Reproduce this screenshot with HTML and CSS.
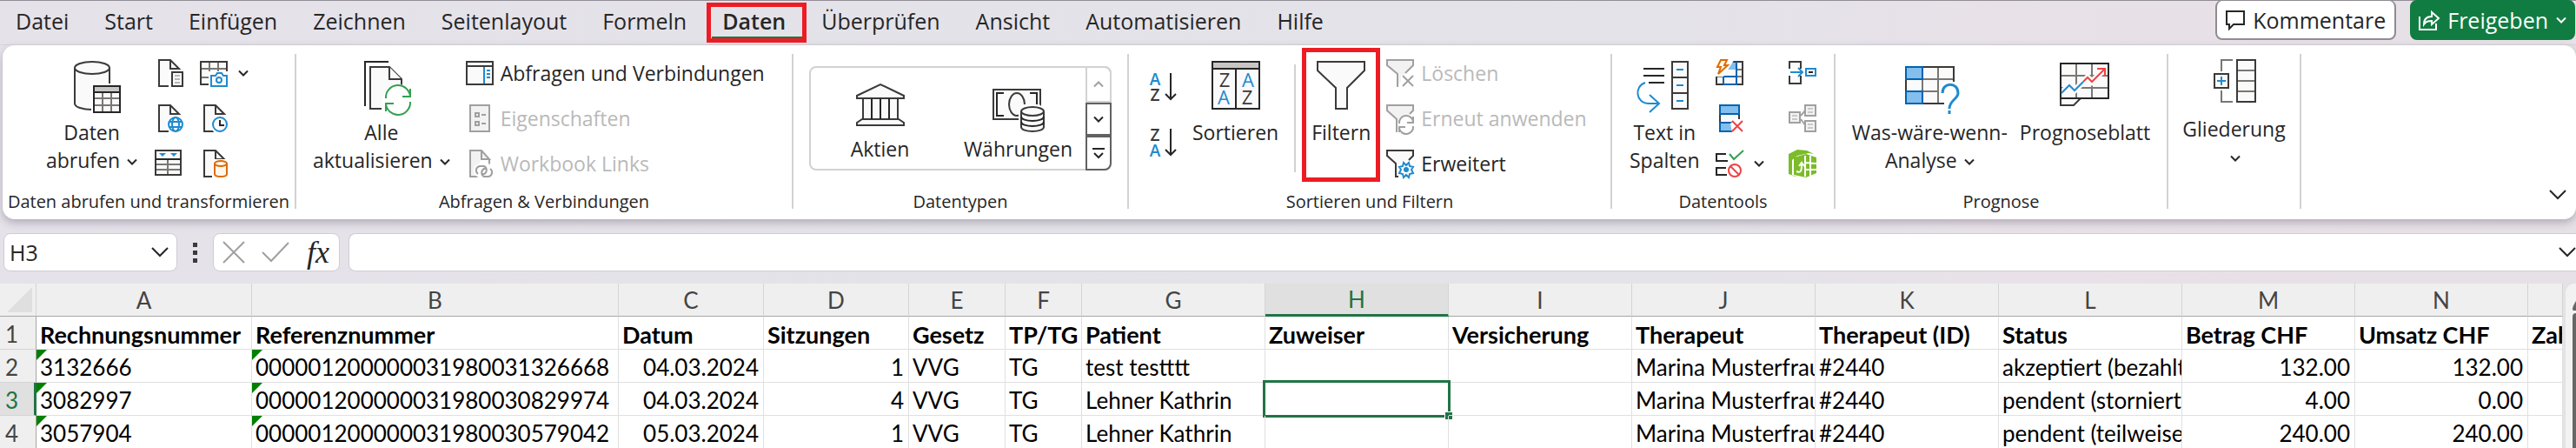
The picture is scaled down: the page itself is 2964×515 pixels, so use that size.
FILE: index.html
```html
<!DOCTYPE html>
<html lang="de">
<head>
  <meta charset="UTF-8">
  <meta name="viewport" content="width=device-width, initial-scale=1.0">
  <title>Excel - Daten</title>
  <link rel="stylesheet" href="styles.css">
</head>
<body>
  <svg class="defs" aria-hidden="true">
    <symbol id="caret" viewBox="0 0 12 8"><path class="line" d="M1 1.5l5 5 5-5"/></symbol>
    <symbol id="chevron" viewBox="0 0 20 12"><path class="line" d="M1 1l9 9 9-9"/></symbol>
    <symbol id="page" viewBox="0 0 32 32"><path class="ink" d="M16 31H5V1h13l10 10H18V1" /></symbol>
  </svg>

  <header class="menubar">
    <nav class="tabs">
      <button class="tab">Datei</button>
      <button class="tab">Start</button>
      <button class="tab">Einfügen</button>
      <button class="tab">Zeichnen</button>
      <button class="tab">Seitenlayout</button>
      <button class="tab">Formeln</button>
      <button class="tab active">Daten</button>
      <button class="tab">Überprüfen</button>
      <button class="tab">Ansicht</button>
      <button class="tab">Automatisieren</button>
      <button class="tab">Hilfe</button>
    </nav>
    <div class="actions">
      <button class="action">
        <svg width="22" height="24"><path class="line" d="M1 2h20v15H9l-5 5v-5H1z"/></svg>
        Kommentare
      </button>
      <button class="action share">
        <svg width="24" height="24"><path class="line" d="M1 8v15h19v-7M6 17c0-6 3-9 9-9V3l8 7-8 7v-4c-4 0-7 1-9 4z"/></svg>
        Freigeben
        <svg class="caret" width="12" height="8"><use href="#caret"/></svg>
      </button>
    </div>
  </header>

  <section class="ribbon">
    <div class="group get-data">
      <div class="group-body">
        <button class="big">
          <svg width="64" height="64">
            <path class="ink" d="M12 10v41c0 4 9 7 20 7s20-3 20-7V10"/>
            <ellipse class="ink" cx="32" cy="10" rx="20" ry="7"/>
            <path class="halo" d="M31 28h34v36H31z"/>
            <path class="ink" d="M34 31h30v30H34z"/>
            <path fill="#c8c6c4" d="M35 32h28v5H35z"/>
            <path class="grey" d="M44 38v22M54 38v22M35 45h28M35 53h28"/>
            <path class="line" d="M34 38h30M34 31h30v30H34z"/>
          </svg>
          <span>Daten</span>
          <span>abrufen <svg class="caret" width="12" height="8"><use href="#caret"/></svg></span>
        </button>
        <div class="icons">
          <button class="small" aria-label="Aus Text/CSV">
            <svg width="32" height="32">
              <use href="#page"/>
              <path class="halo" d="M16 13h16v19H16z"/>
              <path class="ink" d="M20 15h12v16H20z"/>
              <path class="grey thin" d="M23 19h6M23 23h6M23 27h6"/>
            </svg>
          </button>
          <button class="small" aria-label="Aus Bild">
            <svg width="32" height="32">
              <path class="ink" d="M1 3h30v26H1z"/>
              <path class="grey" d="M2 11h28M2 21h28M11 4v24M21 4v24"/>
              <path class="halo" d="M10 14h23v18H10z"/>
              <path class="blue paper" d="M13 19h5l2-3h5l2 3h4v12H13z"/>
              <circle class="blue" cx="22" cy="24" r="3"/>
            </svg>
            <svg class="caret" width="12" height="8"><use href="#caret"/></svg>
          </button>
          <button class="small" aria-label="Aus dem Web">
            <svg width="32" height="32">
              <use href="#page"/>
              <circle class="halo" cx="24" cy="23" r="11"/>
              <circle class="blue paper" cx="24" cy="23" r="8"/>
              <path class="blue" d="M16 20h16M16 26h16"/>
              <ellipse class="blue" cx="24" cy="23" rx="4" ry="8"/>
            </svg>
          </button>
          <button class="small" aria-label="Zuletzt verwendete Quellen">
            <svg width="32" height="32">
              <use href="#page"/>
              <circle class="halo" cx="23" cy="23" r="11"/>
              <circle class="blue paper" cx="23" cy="23" r="8"/>
              <path class="line" d="M23 18v6h5"/>
            </svg>
          </button>
          <button class="small" aria-label="Aus Tabelle/Bereich">
            <svg width="32" height="32">
              <path class="ink" d="M1 1h29v28H1z"/>
              <path class="grey" d="M2 17h27M2 23h27M15 12v16"/>
              <path class="line" d="M1 11h29"/>
              <path fill="#1e8bd0" d="M5 4h8L9 8zM18 4h8l-4 4z"/>
            </svg>
          </button>
          <button class="small" aria-label="Vorhandene Verbindungen">
            <svg width="32" height="32">
              <use href="#page"/>
              <path class="halo" d="M14 11h18v21H14z"/>
              <path class="orange" d="M17 16v12c0 2 3 3 7 3s7-1 7-3V16"/>
              <ellipse class="orange" cx="24" cy="16" rx="7" ry="3"/>
            </svg>
          </button>
        </div>
      </div>
      <div class="group-label">Daten abrufen und transformieren</div>
    </div>

    <div class="group queries">
      <div class="group-body">
        <button class="big">
          <svg width="64" height="64">
            <path class="line" d="M40 3H13v51"/>
            <path class="ink" d="M32 57H19V9h22l14 14v16"/>
            <path class="ink" d="M41 9v14h14"/>
            <circle class="halo" cx="51" cy="47" r="18"/>
            <path class="green" d="M37 45a14 14 0 0 1 28-2M65 49a14 14 0 0 1-28 2M65 34v9h-9M37 60v-9h9"/>
          </svg>
          <span>Alle</span>
          <span>aktualisieren <svg class="caret" width="12" height="8"><use href="#caret"/></svg></span>
        </button>
        <div class="list">
          <button class="small">
            <svg width="32" height="32">
              <path class="ink" d="M1 3h30v26H1zM1 8h30"/>
              <path class="blue" d="M21 9v19M24 13h4M24 17h4M24 21h4"/>
            </svg>
            Abfragen und Verbindungen
          </button>
          <button class="small" disabled>
            <svg width="32" height="32">
              <path class="ink" d="M5 1h22v30H5z"/>
              <path class="line" d="M11 10h4v4h-4zM11 20h4v4h-4zM18 12h5M18 22h5"/>
            </svg>
            Eigenschaften
          </button>
          <button class="small" disabled>
            <svg width="32" height="32">
              <path class="ink" d="M14 31H5V1h13l9 10H18V1M27 11v6"/>
              <rect class="halo" x="9" y="16" width="23" height="16" rx="8"/>
              <path class="line" d="M14 28a5 5 0 0 1 2-9h5a5 5 0 0 1 0 9h-3M28 22a5 5 0 0 1-2 9h-5a5 5 0 0 1 0-9h2"/>
            </svg>
            Workbook Links
          </button>
        </div>
      </div>
      <div class="group-label">Abfragen &amp; Verbindungen</div>
    </div>

    <div class="group datatypes">
      <div class="group-body">
        <div class="gallery">
          <button class="type">
            <svg width="60" height="60">
              <path class="ink" d="M3 17v-3L30 1l27 13v3zM3 48v-3l6-4h42l6 4v3zM10 17h40v24H10z"/>
              <path class="line" d="M20 17v24M30 17v24M40 17v24"/>
            </svg>
            Aktien
          </button>
          <button class="type">
            <svg width="60" height="60">
              <path class="ink" d="M1 7h54v34H1z"/>
              <path class="line" d="M13 11H5v26h8M43 11h8v26"/>
              <ellipse class="ink" cx="28" cy="24" rx="9" ry="13"/>
              <path class="halo" d="M30 30l6-6h18l6 6v26H30z"/>
              <path class="ink" d="M33 32v18c0 3 6 5 13 5s13-2 13-5V32"/>
              <ellipse class="ink" cx="46" cy="32" rx="13" ry="5"/>
              <path class="line" d="M33 38c0 3 6 5 13 5s13-2 13-5M33 44c0 3 6 5 13 5s13-2 13-5"/>
            </svg>
            Währungen
          </button>
          <div class="scroller">
            <button disabled aria-label="Nach oben"><svg width="12" height="8"><path class="line" d="M1 6.5l5-5 5 5"/></svg></button>
            <button aria-label="Nach unten"><svg class="caret" width="12" height="8"><use href="#caret"/></svg></button>
            <button aria-label="Mehr"><svg width="14" height="14"><path class="line" d="M0 2h14M2 7l5 5 5-5"/></svg></button>
          </div>
        </div>
      </div>
      <div class="group-label">Datentypen</div>
    </div>

    <div class="group sort">
      <div class="group-body">
        <div class="sorters">
          <button class="small" aria-label="Von A bis Z sortieren">
            <svg width="32" height="32">
              <text class="letter blue-text" x="7" y="14">A</text>
              <text class="letter" x="7" y="32">Z</text>
              <path class="line" d="M25 0v30M19 24l6 6 6-6"/>
            </svg>
          </button>
          <button class="small" aria-label="Von Z bis A sortieren">
            <svg width="32" height="32">
              <text class="letter" x="7" y="14">Z</text>
              <text class="letter blue-text" x="7" y="32">A</text>
              <path class="line" d="M25 0v30M19 24l6 6 6-6"/>
            </svg>
          </button>
        </div>
        <button class="big">
          <svg width="64" height="64">
            <path class="ink" d="M5 3h54v54H5z"/>
            <path fill="#c8c6c4" d="M6 4h52v6H6z"/>
            <path class="line" d="M5 11h54M32 11v46M5 3h54v54H5z"/>
            <text class="letter light" x="19" y="32">Z</text>
            <text class="letter light blue-text" x="46" y="32">A</text>
            <text class="letter light blue-text" x="18" y="52">A</text>
            <text class="letter light" x="45" y="52">Z</text>
          </svg>
          <span>Sortieren</span>
        </button>
        <div class="divider"></div>
        <button class="big marked">
          <svg width="64" height="64"><path class="ink" d="M5 3h54v10L39 33v24H26V33L5 13z"/></svg>
          <span>Filtern</span>
        </button>
        <div class="list">
          <button class="small" disabled>
            <svg width="32" height="32">
              <path class="ink" d="M13 32V17L1 7V1h30v6l-9 9"/>
              <path class="halo" d="M17 18h15v14H17z"/>
              <path class="line" d="M19 19l12 12M31 19L19 31"/>
            </svg>
            Löschen
          </button>
          <button class="small" disabled>
            <svg width="32" height="32">
              <path class="ink" d="M12 32V17L1 7V1h30v6l-4 4"/>
              <circle class="halo" cx="23" cy="23" r="10"/>
              <path class="line" d="M15 22a8 8 0 0 1 16-2M31 25a8 8 0 0 1-16 2M31 14v7h-7M15 32v-6h7"/>
            </svg>
            Erneut anwenden
          </button>
          <button class="small">
            <svg width="32" height="32">
              <path class="ink" d="M14 31h-3V16L1 7V1h30v6l-5 5"/>
              <circle class="halo" cx="23" cy="23" r="10"/>
              <path class="blue" d="M20 15l3 3 3-3 1 4 4 1-2 3 2 4-4 1-1 4-3-3-3 3-1-4-4-1 2-4-2-3 4-1z"/>
              <circle fill="#1e8bd0" cx="23" cy="23" r="3"/>
            </svg>
            Erweitert
          </button>
        </div>
      </div>
      <div class="group-label">Sortieren und Filtern</div>
    </div>

    <div class="group tools">
      <div class="group-body">
        <button class="big">
          <svg width="64" height="64">
            <path class="line" d="M8 11h24M8 19h24M14 27h18"/>
            <path class="ink" d="M41 3h18v54H41zM41 21h18M41 39h18"/>
            <path class="blue" d="M46 12h8M46 30h8M46 48h8M10 27C-3 31-1 51 14 51h12M15 41l11 10-11 10"/>
          </svg>
          <span>Text in</span>
          <span>Spalten</span>
        </button>
        <div class="icons">
          <button class="small" aria-label="Blitzvorschau">
            <svg width="32" height="32">
              <path class="ink" d="M1 3h30v26H1z"/>
              <path class="grey" d="M24 12h6M2 20h28"/>
              <path fill="#83beec" d="M9 4h15v8H9z"/>
              <path class="navy" d="M9 29V12M9 20h15M24 3v26H9"/>
              <path class="halo" d="M0 0h22L9 20H0z"/>
              <path class="orange" d="M6 1h7l-3 6h4L3 17l3-8H2z"/>
            </svg>
          </button>
          <button class="small" aria-label="Konsolidieren">
            <svg width="32" height="32">
              <path class="ink" d="M1 11V3h13v8M1 19v9h13v-9"/>
              <path class="blue" d="M2 15h13M11 10l5 5-5 5"/>
              <path class="blue paper" d="M20 11h11v8H20z"/>
              <path class="line" d="M23 15h5"/>
            </svg>
          </button>
          <button class="small" aria-label="Duplikate entfernen">
            <svg width="32" height="32">
              <path class="ink" d="M5 1h22v30H5z"/>
              <path class="navy" fill="#83beec" d="M5 1h22v10H5zM5 21h16v10H5z"/>
              <path class="halo" d="M17 22l6-5h10v15H19z"/>
              <path class="red" d="M19 19l12 12M31 19L19 31"/>
            </svg>
          </button>
          <button class="small" disabled aria-label="Beziehungen">
            <svg width="32" height="32">
              <path class="line" d="M14 13l6-7M14 17l6 8"/>
              <path class="ink" d="M1 9h12v12H1zM19 1h12v12H19zM19 19h12v12H19z"/>
              <path class="line thin" d="M4 13h6M4 17h6M22 5h6M22 9h6M22 23h6M22 27h6"/>
            </svg>
          </button>
          <button class="small" aria-label="Datenüberprüfung">
            <svg width="32" height="32">
              <path class="line" d="M12 5H1v8h13M12 21H1v8h12"/>
              <path class="green" d="M16 5l5 6L32 1"/>
              <circle class="red" cx="22" cy="24" r="7"/>
              <path class="red" d="M17 19l10 10"/>
            </svg>
            <svg class="caret" width="12" height="8"><use href="#caret"/></svg>
          </button>
          <button class="small" aria-label="Datenmodell verwalten">
            <svg width="32" height="32">
              <path fill="#7cbb2a" d="M0 5L10 0l11 1 8 4-6-1-13 3-6 5v18l8 2L0 28z"/>
              <path fill="#7cbb2a" d="M6 9l14-4 12 4v18l-12 5-14-3z"/>
              <path class="white" d="M19 7v24M25 7v23M19 15l13 1M19 23h13M9 25c5 2 6 0 6-8M12 19l3-4 3 4"/>
            </svg>
          </button>
        </div>
      </div>
      <div class="group-label">Datentools</div>
    </div>

    <div class="group forecast">
      <div class="group-body">
        <button class="big">
          <svg width="64" height="64">
            <path class="ink" d="M5 9h55v42H5z"/>
            <path class="grey" d="M24 10v40M42 10v40M6 23h53M6 37h53"/>
            <path class="navy" fill="#83beec" d="M5 9h19v14H5zM5 37h19v14H5z"/>
            <path class="halo" d="M43 35l5-9h16v36H49V47h-6z"/>
            <path class="blue wide" d="M47 39c0-13 18-13 18 0 0 7-10 8-10 18M55 59v4"/>
          </svg>
          <span>Was-wäre-wenn-</span>
          <span>Analyse <svg class="caret" width="12" height="8"><use href="#caret"/></svg></span>
        </button>
        <button class="big">
          <svg width="64" height="64">
            <path class="ink" d="M4 45v8h15l8-8M4 5h55v40H4z"/>
            <path class="grey" d="M22 6v38M40 6v38M5 19h53M5 33h53"/>
            <path class="halo line-halo" d="M5 39l9-9 6 6 15-15 5 5 15-15"/>
            <path class="line" d="M4 5h55v40H4z"/>
            <path class="blue" d="M5 39l9-9 6 6 10-10"/>
            <path class="red" d="M30 26l5-5 5 5 15-15M46 11h9v9"/>
          </svg>
          <span>Prognoseblatt</span>
        </button>
      </div>
      <div class="group-label">Prognose</div>
    </div>

    <div class="group outline">
      <div class="group-body">
        <button class="big">
          <svg width="64" height="60">
            <path class="grey" d="M30 1H17v13M17 36v13h13"/>
            <path class="ink" d="M9 17h16v16H9zM35 1h21v48H35z"/>
            <path class="grey" d="M36 13h19M36 25h19M36 37h19"/>
            <path class="blue" d="M12 25h10M17 20v10"/>
          </svg>
          <span>Gliederung</span>
          <span><svg class="caret" width="12" height="8"><use href="#caret"/></svg></span>
        </button>
      </div>
    </div>

    <button class="collapse" aria-label="Menüband reduzieren"><svg width="20" height="12"><use href="#chevron"/></svg></button>
  </section>

  <section class="formula-bar">
    <div class="name-box">
      <input type="text" value="H3" aria-label="Namenfeld">
      <svg width="20" height="12"><use href="#chevron"/></svg>
    </div>
    <div class="dots"><i></i><i></i><i></i></div>
    <div class="entry">
      <button disabled aria-label="Abbrechen"><svg width="24" height="24"><path class="line" d="M0 0l24 24M24 0L0 24"/></svg></button>
      <button disabled aria-label="Eingeben"><svg width="32" height="24"><path class="line" d="M1 12l10 10L31 1"/></svg></button>
      <button class="fx">fx</button>
    </div>
    <div class="formula">
      <input type="text" aria-label="Formel">
      <svg width="20" height="12"><use href="#chevron"/></svg>
    </div>
  </section>

  <main class="sheet">
    <table>
      <colgroup>
        <col class="c-row"><col class="c-a"><col class="c-b"><col class="c-c"><col class="c-c"><col class="c-e"><col class="c-f">
        <col class="c-text"><col class="c-text"><col class="c-text"><col class="c-text"><col class="c-text"><col class="c-text">
        <col class="c-sum"><col class="c-sum"><col>
      </colgroup>
      <thead>
        <tr>
          <th class="corner"><svg width="29" height="29"><path fill="#dfdfdf" d="M29 0v29H0z"/></svg></th>
          <th>A</th><th>B</th><th>C</th><th>D</th><th>E</th><th>F</th><th>G</th><th class="current">H</th>
          <th>I</th><th>J</th><th>K</th><th>L</th><th>M</th><th>N</th><th></th>
        </tr>
      </thead>
      <tbody>
        <tr class="titles">
          <th>1</th>
          <td>Rechnungsnummer</td><td>Referenznummer</td><td>Datum</td><td>Sitzungen</td><td>Gesetz</td><td>TP/TG</td>
          <td>Patient</td><td>Zuweiser</td><td>Versicherung</td><td>Therapeut</td><td>Therapeut (ID)</td><td>Status</td>
          <td>Betrag CHF</td><td>Umsatz CHF</td><td>Zahlung</td>
        </tr>
        <tr>
          <th>2</th>
          <td class="flag">3132666</td><td class="flag">000001200000031980031326668</td><td class="num">04.03.2024</td><td class="num">1</td><td>VVG</td><td>TG</td>
          <td>test testttt</td><td></td><td></td><td>Marina Musterfrau</td><td>#2440</td><td>akzeptiert (bezahlt)</td>
          <td class="num">132.00</td><td class="num">132.00</td><td></td>
        </tr>
        <tr>
          <th class="current">3</th>
          <td class="flag">3082997</td><td class="flag">000001200000031980030829974</td><td class="num">04.03.2024</td><td class="num">4</td><td>VVG</td><td>TG</td>
          <td>Lehner Kathrin</td><td class="selected"></td><td></td><td>Marina Musterfrau</td><td>#2440</td><td>pendent (storniert)</td>
          <td class="num">4.00</td><td class="num">0.00</td><td></td>
        </tr>
        <tr>
          <th>4</th>
          <td class="flag">3057904</td><td class="flag">000001200000031980030579042</td><td class="num">05.03.2024</td><td class="num">1</td><td>VVG</td><td>TG</td>
          <td>Lehner Kathrin</td><td></td><td></td><td>Marina Musterfrau</td><td>#2440</td><td>pendent (teilweise)</td>
          <td class="num">240.00</td><td class="num">240.00</td><td></td>
        </tr>
      </tbody>
    </table>
    <div class="scrollbar">
      <svg width="12" height="16"><path fill="#666" d="M8 14c0-4 3-8 4-10v11H9z"/></svg>
      <div class="thumb"></div>
    </div>
  </main>
</body>
</html>
```

FILE: styles.css
```css
* {
  box-sizing: border-box;
}
body {
  margin: 0;
  height: 100vh;
  overflow: hidden;
  font-family: "Open Sans", "Noto Sans", sans-serif;
  font-size: 23px;
  color: #262626;
  background: linear-gradient(90deg, #e5e2ea 0%, #e4e3e9 65%, #e8e1e8 78%, #e6e1e6 100%);
}
button, input {
  font: inherit;
  color: inherit;
  border: none;
  background: none;
  padding: 0;
}
svg {
  display: block;
  flex: none;
  overflow: visible;
}
.defs {
  position: absolute;
  width: 0;
  height: 0;
}

/* icon strokes */
.ink, .line, .grey, .blue, .navy, .green, .red, .orange, .white {
  fill: none;
  stroke-width: 2;
}
.ink { stroke: #3b3a39; fill: #fafafa; }
.line { stroke: currentColor; }
.grey { stroke: #797774; }
.blue { stroke: #1e8bd0; }
.navy { stroke: #0063b1; fill: none; }
.navy[fill] { fill: #83beec; }
.green { stroke: #33a050; }
.red { stroke: #ee4444; }
.orange { stroke: #dd6b00; fill: #fff7ec; }
.white { stroke: #fff; }
.paper { fill: #fafafa; }
.halo { fill: #fff; }
.line-halo { fill: none; stroke: #fafafa; stroke-width: 7; }
.wide { stroke-width: 3; }
.thin { stroke-width: 1; }
.letter {
  font-size: 19px;
  font-weight: 600;
  text-anchor: middle;
  fill: #3b3a39;
}
.letter.light { font-size: 22px; font-weight: 400; }
.letter.blue-text { fill: #1e8bd0; }

/* tabs */
.menubar {
  display: flex;
  justify-content: space-between;
  height: 52px;
  border-top: 1px solid #918d96;
  border-bottom: 1px solid #d6d3db;
}
.tabs {
  display: flex;
  gap: 41px;
  padding-left: 18px;
  font-size: 25px;
  line-height: 46px;
}
.tab {
  position: relative;
  height: 46px;
}
.active {
  font-weight: 600;
}
.active::before {
  content: "";
  position: absolute;
  left: -12px;
  right: -19px;
  top: 41px;
  height: 2px;
  background: #107c41;
}
.active::after,
.marked::after {
  content: "";
  position: absolute;
  border: 5px solid #ed1c24;
}
.active::after {
  inset: 2px -24px -2px -18px;
}
.actions {
  display: flex;
  gap: 16px;
  margin-top: -1px;
  font-size: 25px;
}
.action {
  display: flex;
  align-items: center;
  gap: 9px;
  height: 46px;
  padding: 0 10px;
  background: #fff;
  border: 2px solid #8f8c92;
  border-top-width: 1px;
  border-radius: 8px;
}
.share {
  color: #fff;
  background: #107c41;
  border-color: #107c41;
  padding: 0 8px;
  margin-right: 1px;
}

/* ribbon */
.ribbon {
  display: flex;
  margin-left: 3px;
  padding: 10px 0 12px;
  height: 200px;
  background: #fff;
  border-radius: 14px;
  box-shadow: 0 4px 10px rgba(60, 50, 70, 0.3);
}
.group {
  flex: none;
  display: flex;
  flex-direction: column;
  padding-top: 6px;
  border-right: 2px solid #d2d2d2;
}
.group-body {
  display: flex;
  height: 136px;
}
.group-label {
  margin-top: 20px;
  font-size: 20px;
  line-height: 16px;
  text-align: center;
  white-space: nowrap;
}
.get-data { width: 338px; }
.queries { width: 572px; }
.datatypes { width: 386px; }
.sort { width: 556px; }
.tools { width: 257px; }
.forecast { width: 383px; }
.outline { width: 153px; }
.get-data .group-body { padding-left: 50px; gap: 20px; }
.queries .group-body { padding-left: 19px; gap: 18px; }
.datatypes .group-body { padding: 8px 18px; }
.sort .group-body { padding-left: 23px; gap: 18px; }
.tools .group-body { padding-left: 20px; gap: 18px; }
.forecast .group-body { justify-content: center; gap: 14px; }
.outline .group-body { justify-content: center; }

.big {
  position: relative;
  display: flex;
  flex-direction: column;
  align-items: center;
  line-height: 32px;
  white-space: nowrap;
}
.big > svg { margin-bottom: 4px; }
.big .caret {
  display: inline-block;
  vertical-align: 3px;
  margin-left: 2px;
}
.marked::after {
  inset: -13px -11px -5px -11px;
}
.small {
  display: flex;
  align-items: center;
  gap: 8px;
  height: 32px;
  line-height: 32px;
  white-space: nowrap;
}
.small .caret { margin-left: 4px; }
.icons {
  display: grid;
  grid-template-columns: auto auto;
  align-content: start;
  gap: 20px;
}
.tools .icons { column-gap: 28px; }
.list {
  display: flex;
  flex-direction: column;
  gap: 20px;
}
button:disabled { color: #b9b9b9; }
button:disabled svg { color: #a0a0a0; }
button:disabled .ink { stroke: #a0a0a0; fill: #f2f2f2; }
.sorters {
  display: flex;
  flex-direction: column;
  gap: 32px;
  padding-top: 16px;
}
.divider {
  width: 2px;
  height: 124px;
  margin-top: 6px;
  background: #d2d2d2;
}
.gallery {
  display: flex;
  width: 100%;
  border: 2px solid #d2d2d2;
  border-radius: 8px;
}
.type {
  flex: 1;
  display: flex;
  flex-direction: column;
  align-items: center;
  padding-top: 18px;
  line-height: 30px;
}
.scroller {
  display: grid;
  grid-template-rows: 42px 38px 40px;
  width: 30px;
  margin: -2px;
}
.scroller button {
  display: grid;
  place-items: center;
  border: 2px solid #616161;
}
.scroller button:first-child {
  border-color: #d2d2d2;
  border-top-right-radius: 8px;
}
.scroller button:last-child { border-bottom-right-radius: 8px; }
.collapse {
  align-self: flex-end;
  margin: 0 11px 10px auto;
}

/* formula bar */
.formula-bar {
  display: flex;
  align-items: center;
  height: 74px;
  padding: 2px 0 0 4px;
}
.name-box, .entry, .formula {
  display: flex;
  align-items: center;
  height: 44px;
  background: #fff;
  border: 1px solid #cfccd4;
  border-radius: 8px;
}
.name-box {
  width: 200px;
  padding: 0 9px 0 6px;
  font-size: 25px;
}
.name-box input { width: 100%; }
.dots {
  display: grid;
  gap: 4px;
  margin: 0 18px;
}
.dots i {
  width: 5px;
  height: 5px;
  background: #3b3a39;
}
.entry {
  gap: 20px;
  padding: 0 11px;
  margin-right: 10px;
}
.entry .fx {
  font: italic 36px/36px "Liberation Serif", serif;
}
.formula {
  flex: 1;
  border-right: none;
  border-radius: 8px 0 0 8px;
}
.formula input {
  flex: 1;
  height: 100%;
  padding: 0 10px;
}

/* sheet */
.sheet {
  display: flex;
  gap: 3px;
  font-family: Lato, sans-serif;
  font-size: 26px;
  color: #000;
}
table {
  flex: 1;
  width: 0;
  table-layout: fixed;
  border-collapse: separate;
  border-spacing: 0;
  background: #fff;
}
.c-row { width: 42px; }
.c-a { width: 248px; }
.c-b { width: 422px; }
.c-c { width: 167px; }
.c-e { width: 111px; }
.c-f { width: 88px; }
.c-text { width: 211px; }
.c-sum { width: 199px; }
th {
  padding: 0;
  font-weight: 400;
  color: #444;
  background: #efefef;
  border-right: 1px solid #d4d4d4;
}
thead th {
  height: 38px;
  border-bottom: 1px solid #a6a6a6;
}
tbody th {
  padding: 4px 14px 0 0;
  line-height: 33px;
  border-right-color: #a6a6a6;
  border-bottom: 1px solid #d4d4d4;
}
.corner svg { margin-left: 8px; }
th.current {
  color: #217346;
  background: #e0e0e0;
}
thead th.current { border-bottom: 3px solid #217346; }
tbody th.current {
  padding-right: 12px;
  border-right: 3px solid #217346;
}
td {
  position: relative;
  height: 38px;
  padding: 4px 5px 0 4px;
  line-height: 33px;
  white-space: nowrap;
  overflow: hidden;
  border-right: 1px solid #e0e0e0;
  border-bottom: 1px solid #e0e0e0;
}
.titles td {
  font-size: 27px;
  font-weight: 700;
}
.num { text-align: right; }
.flag::before {
  content: "";
  position: absolute;
  left: 0;
  top: 0;
  border: 6px solid;
  border-color: #008000 transparent transparent #008000;
}
td.selected { overflow: visible; }
.selected::before {
  content: "";
  position: absolute;
  inset: -3px -3px;
  border: 3px solid #217346;
}
.selected::after {
  content: "";
  position: absolute;
  right: -5px;
  bottom: -5px;
  width: 8px;
  height: 8px;
  background: #217346;
  border: solid #fff;
  border-width: 1px 0 0 1px;
}
.scrollbar {
  width: 12px;
  padding-top: 16px;
  background: #f3f2f3;
  border-radius: 10px 0 0 0;
}
.thumb {
  height: 100%;
  margin: 2px 0 0 8px;
  background: #666;
  border-radius: 6px 0 0 0;
}
```
